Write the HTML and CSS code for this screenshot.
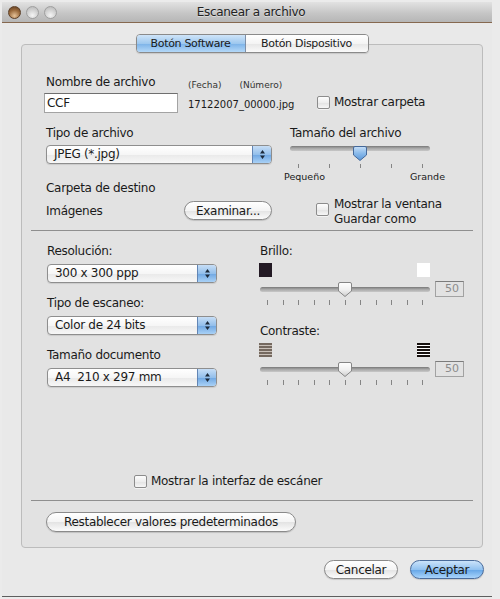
FILE: index.html
```html
<!DOCTYPE html>
<html lang="es">
<head>
    <meta charset="UTF-8">
    <title>Escanear a archivo</title>
    <link rel="stylesheet" href="styles.css">
</head>
<body>
    <svg class="defs" width="0" height="0">
        <defs>
            <linearGradient id="knobGray" x1="0" y1="0" x2="0" y2="1">
                <stop offset="0" stop-color="#ffffff"/>
                <stop offset="0.5" stop-color="#f1f1f1"/>
                <stop offset="1" stop-color="#cfcfcf"/>
            </linearGradient>
            <linearGradient id="knobBlue" x1="0" y1="0" x2="0" y2="1">
                <stop offset="0" stop-color="#c8e0f8"/>
                <stop offset="0.5" stop-color="#88b9ea"/>
                <stop offset="1" stop-color="#5b97d8"/>
            </linearGradient>
        </defs>
    </svg>

    <div class="window">
        <div class="titlebar">
            <div class="lights">
                <span class="light close"></span>
                <span class="light"></span>
                <span class="light"></span>
            </div>
            <div class="title">Escanear a archivo</div>
        </div>

        <div class="tabs-bar">
            <div class="segmented">
                <div class="tab active">Botón Software</div>
                <div class="tab">Botón Dispositivo</div>
            </div>
        </div>

        <div class="tabbox">
            <div class="row row-name">
                <div class="col-name">
                    <div class="label indent">Nombre de archivo</div>
                    <div class="field">CCF</div>
                </div>
                <div class="col-file">
                    <div class="hint"><span class="hint-date">(Fecha)</span><span>(Número)</span></div>
                    <div class="filename">17122007_00000.jpg</div>
                </div>
                <div class="col-show">
                    <div class="check-row"><span class="checkbox"></span><span>Mostrar carpeta</span></div>
                </div>
            </div>

            <div class="row row-type">
                <div class="col-type">
                    <div class="label">Tipo de archivo</div>
                    <div class="popup popup-type">
                        <span class="popup-value">JPEG (*.jpg)</span>
                        <span class="popup-arrows"><svg width="7" height="11" viewBox="0 0 7 11"><path d="M3.5 1 L6 4.5 H1 Z M1 6.5 H6 L3.5 10 Z" fill="#1d2a3a"/></svg></span>
                    </div>
                </div>
                <div class="col-size">
                    <div class="label size-label">Tamaño del archivo</div>
                    <div class="slider size-slider">
                        <div class="track"></div>
                        <svg class="knob size-knob" width="14" height="15" viewBox="0 0 14 15"><path d="M2 0.5 H12 Q13.5 0.5 13.5 2 V9 L7 14.5 L0.5 9 V2 Q0.5 0.5 2 0.5 Z" fill="url(#knobBlue)" stroke="#45699a"/></svg>
                    </div>
                    <div class="ticks size-ticks">
                        <span></span><span></span><span></span><span></span><span></span>
                    </div>
                    <div class="size-names"><span>Pequeño</span><span>Grande</span></div>
                </div>
            </div>

            <div class="row row-dest">
                <div class="col-dest">
                    <div class="label">Carpeta de destino</div>
                    <div class="dest-line">
                        <span>Imágenes</span>
                        <button class="btn btn-browse">Examinar...</button>
                    </div>
                </div>
                <div class="col-save">
                    <span class="checkbox"></span>
                    <span class="save-text">Mostrar la ventana<br>Guardar como</span>
                </div>
            </div>

            <div class="sep sep-top"></div>

            <div class="row row-scan">
                <div class="col-scan">
                    <div class="group">
                        <div class="label">Resolución:</div>
                        <div class="popup">
                            <span class="popup-value">300 x 300 ppp</span>
                            <span class="popup-arrows"><svg width="7" height="11" viewBox="0 0 7 11"><path d="M3.5 1 L6 4.5 H1 Z M1 6.5 H6 L3.5 10 Z" fill="#1d2a3a"/></svg></span>
                        </div>
                    </div>
                    <div class="group">
                        <div class="label">Tipo de escaneo:</div>
                        <div class="popup">
                            <span class="popup-value">Color de 24 bits</span>
                            <span class="popup-arrows"><svg width="7" height="11" viewBox="0 0 7 11"><path d="M3.5 1 L6 4.5 H1 Z M1 6.5 H6 L3.5 10 Z" fill="#1d2a3a"/></svg></span>
                        </div>
                    </div>
                    <div class="group">
                        <div class="label">Tamaño documento</div>
                        <div class="popup">
                            <span class="popup-value">A4&nbsp; 210 x 297 mm</span>
                            <span class="popup-arrows"><svg width="7" height="11" viewBox="0 0 7 11"><path d="M3.5 1 L6 4.5 H1 Z M1 6.5 H6 L3.5 10 Z" fill="#1d2a3a"/></svg></span>
                        </div>
                    </div>
                </div>

                <div class="col-adjust">
                    <div class="adjust">
                        <div class="label adj-label">Brillo:</div>
                        <div class="adj-icons">
                            <span class="icon icon-dark"></span>
                            <span class="icon icon-light"></span>
                        </div>
                        <div class="adj-slider">
                            <div class="slider">
                                <div class="track"></div>
                                <svg class="knob adj-knob" width="14" height="15" viewBox="0 0 14 15"><path d="M2 0.5 H12 Q13.5 0.5 13.5 2 V9 L7 14.5 L0.5 9 V2 Q0.5 0.5 2 0.5 Z" fill="url(#knobGray)" stroke="#858585"/></svg>
                            </div>
                            <div class="valuebox">50</div>
                        </div>
                        <div class="ticks adj-ticks">
                            <span></span><span></span><span></span><span></span><span></span><span></span><span></span><span></span><span></span><span></span><span></span>
                        </div>
                    </div>
                    <div class="adjust adjust-contrast">
                        <div class="label adj-label">Contraste:</div>
                        <div class="adj-icons">
                            <span class="icon icon-low"></span>
                            <span class="icon icon-high"></span>
                        </div>
                        <div class="adj-slider">
                            <div class="slider">
                                <div class="track"></div>
                                <svg class="knob adj-knob" width="14" height="15" viewBox="0 0 14 15"><path d="M2 0.5 H12 Q13.5 0.5 13.5 2 V9 L7 14.5 L0.5 9 V2 Q0.5 0.5 2 0.5 Z" fill="url(#knobGray)" stroke="#858585"/></svg>
                            </div>
                            <div class="valuebox">50</div>
                        </div>
                        <div class="ticks adj-ticks">
                            <span></span><span></span><span></span><span></span><span></span><span></span><span></span><span></span><span></span><span></span><span></span>
                        </div>
                    </div>
                </div>
            </div>

            <div class="row row-interface">
                <div class="check-row"><span class="checkbox"></span><span>Mostrar la interfaz de escáner</span></div>
            </div>

            <div class="sep sep-bottom"></div>

            <div class="row row-reset">
                <button class="btn btn-reset">Restablecer valores predeterminados</button>
            </div>
        </div>

        <div class="actions">
            <button class="btn btn-action">Cancelar</button>
            <button class="btn btn-action default">Aceptar</button>
        </div>
    </div>
</body>
</html>
```

FILE: styles.css
```css
body {
    margin: 0;
    background: #ebebeb;
    font-family: "DejaVu Sans", "Liberation Sans", sans-serif;
    font-size: 12px;
    letter-spacing: -0.3px;
    color: #1a1a1a;
}

.defs {
    position: absolute;
}

.window {
    box-sizing: border-box;
    width: 490px;
    height: 595px;
    margin: 2px 0 0 2px;
    background: #e9e9e9;
    border-bottom: 1px solid #5e5e5e;
}

/* title bar */

.titlebar {
    display: flex;
    align-items: center;
    height: 20px;
    padding-right: 47px;
    background: linear-gradient(#e2e2e2, #c6c6c6 55%, #b6b6b6);
    border-bottom: 1px solid #86684f;
}

.lights {
    display: flex;
    gap: 5px;
    padding-left: 6px;
}

.light {
    box-sizing: border-box;
    width: 13px;
    height: 13px;
    border-radius: 50%;
    border: 1px solid #9f9f9f;
    background: radial-gradient(circle at 50% 75%, #f4f4f4, #d0d0d0 55%, #b4b4b4);
}

.light.close {
    border-color: #5c3f27;
    background: radial-gradient(circle at 50% 80%, #e6c298, #9a6a3c 55%, #5b3a1e);
}

.title {
    flex: 1;
    text-align: center;
    color: #222;
    text-shadow: 0 1px 0 rgba(255, 255, 255, 0.45);
}

/* tabs */

.tabs-bar {
    position: relative;
    z-index: 1;
    display: flex;
    justify-content: center;
    width: 462px;
    margin: 11px 0 0 19px;
}

.segmented {
    display: flex;
    height: 19px;
    box-sizing: border-box;
    border: 1px solid #8a8a8a;
    border-radius: 4px;
    overflow: hidden;
    box-shadow: 0 1px 1px rgba(0, 0, 0, 0.12);
}

.tab {
    font-size: 11px;
    line-height: 17px;
    text-align: center;
    background: linear-gradient(#ffffff, #f4f4f4 50%, #e6e6e6 51%, #fafafa);
}

.tab:first-child {
    width: 108px;
    border-right: 1px solid #7d8fa8;
}

.tab:last-child {
    width: 122px;
}

.tab.active {
    background: linear-gradient(#cfe4f8, #9ec8ef 50%, #7bb2e8 51%, #b4d8f8);
}

.tabbox {
    box-sizing: border-box;
    width: 462px;
    height: 504px;
    margin: -9px 0 0 19px;
    background: #e2e2e2;
    border: 1px solid #bcbcbc;
    border-radius: 4px;
}

/* rows */

.row {
    display: flex;
}

.label {
    line-height: 15px;
}

.indent {
    margin-left: 2px;
}

.row-name {
    margin-top: 30px;
    padding-left: 22px;
}

.col-name {
    width: 134px;
}

.field {
    box-sizing: border-box;
    height: 20px;
    margin-top: 3px;
    padding-left: 2px;
    line-height: 19px;
    background: #fff;
    border: 1px solid #a3a3a3;
    border-top-color: #6f6f6f;
}

.col-file {
    width: 129px;
    margin-left: 10px;
    padding-top: 5px;
}

.hint {
    font-size: 9px;
    line-height: 11px;
    letter-spacing: 0;
    color: #333;
}

.hint-date {
    margin-right: 18px;
}

.filename {
    margin-top: 7px;
    font-size: 10px;
    line-height: 13px;
    letter-spacing: 0;
}

.col-show {
    padding-top: 20px;
}

.check-row {
    display: flex;
    align-items: center;
    gap: 4px;
    line-height: 15px;
}

.checkbox {
    box-sizing: border-box;
    width: 13px;
    height: 13px;
    flex: none;
    border: 1px solid #8c8c8c;
    border-radius: 2px;
    background: linear-gradient(#fdfdfd, #eeeeee 50%, #e2e2e2 51%, #f6f6f6);
    box-shadow: 0 1px 0 rgba(255, 255, 255, 0.6);
}

.row-type {
    height: 55px;
    margin-top: 13px;
    padding-left: 24px;
}

.col-type {
    width: 226px;
}

.popup {
    display: flex;
    box-sizing: border-box;
    height: 19px;
    margin-top: 5px;
    border: 1px solid #8e8e8e;
    border-radius: 4px;
    background: linear-gradient(#ffffff, #f6f6f6 50%, #e9e9e9 51%, #f7f7f7);
    box-shadow: 0 1px 1px rgba(0, 0, 0, 0.1);
}

.popup-type {
    margin-top: 4px;
}

.popup-value {
    flex: 1;
    padding-left: 7px;
    line-height: 17px;
}

.popup-arrows {
    display: flex;
    align-items: center;
    justify-content: center;
    width: 18px;
    border-left: 1px solid #6285b4;
    border-radius: 0 3px 3px 0;
    background: linear-gradient(#c7def6, #93bfeb 50%, #6ea6e2 51%, #a9d1f6);
}

.col-size {
    width: 161px;
    margin-left: 12px;
}

.size-label {
    margin-left: 6px;
}

.slider {
    position: relative;
    height: 16px;
}

.track {
    height: 5px;
    margin-top: 5px;
    border-radius: 3px;
    background: linear-gradient(#787878, #a6a6a6 45%, #c8c8c8);
}

.knob {
    position: absolute;
    top: 0;
}

.size-slider {
    width: 140px;
    margin: 5px 0 0 6px;
}

.size-slider .track {
    margin-top: 4px;
}

.size-knob {
    left: 63px;
}

.ticks {
    display: flex;
    justify-content: space-between;
    margin-top: 2px;
}

.ticks span {
    width: 1px;
    height: 4px;
    background: #858585;
}

.size-ticks {
    width: 140px;
    margin-left: 6px;
    box-sizing: border-box;
    padding: 0 7px 0 8px;
}

.size-names {
    display: flex;
    justify-content: space-between;
    margin-top: 3px;
    font-size: 9.5px;
    line-height: 12px;
    letter-spacing: 0;
}

.row-dest {
    height: 46px;
    padding-left: 24px;
}

.col-dest {
    width: 226px;
}

.dest-line {
    display: flex;
    align-items: center;
    justify-content: space-between;
    height: 19px;
    margin-top: 5px;
}

.col-save {
    display: flex;
    align-items: flex-start;
    margin-left: 44px;
    padding-top: 16px;
}

.col-save .checkbox {
    margin-top: 6px;
}

.save-text {
    margin-left: 5px;
    line-height: 15px;
}

.sep {
    margin: 0 9px;
    border-top: 1px solid #8f8f8f;
}

.sep-top {
    margin-top: 3px;
}

.sep-bottom {
    margin-top: 11px;
}

/* scan settings */

.row-scan {
    height: 143px;
    margin-top: 13px;
    padding-left: 25px;
}

.col-scan {
    width: 170px;
}

.group + .group {
    margin-top: 13px;
}

.col-adjust {
    width: 205px;
    margin-left: 42px;
}

.adj-label {
    margin-left: 1px;
}

.adjust-contrast {
    margin-top: 19px;
}

.adj-icons {
    display: flex;
    justify-content: space-between;
    width: 171px;
    margin-top: 4px;
}

.icon {
    width: 13px;
    height: 14px;
}

.icon-dark {
    background: #231a24;
}

.icon-light {
    background: #ffffff;
}

.icon-low {
    background: repeating-linear-gradient(#75695f 0 2px, #c9c0b8 2px 3px);
}

.icon-high {
    background: repeating-linear-gradient(#17110f 0 2px, #ffffff 2px 3px);
}

.adj-slider {
    display: flex;
    align-items: flex-start;
    margin-top: 4px;
}

.adj-slider .slider {
    width: 170px;
    margin: 1px 0 0 1px;
}

.adj-knob {
    left: 78px;
}

.valuebox {
    box-sizing: border-box;
    width: 29px;
    height: 16px;
    margin-left: 5px;
    padding-right: 4px;
    border: 1px solid #a2a2a2;
    border-top-color: #7c7c7c;
    text-align: right;
    font-size: 11px;
    line-height: 14px;
    letter-spacing: 0;
    color: #8c8c8c;
}

.adj-ticks {
    width: 170px;
    margin-left: 1px;
    box-sizing: border-box;
    padding: 0 7px;
}

.adj-ticks span {
    height: 5px;
}

.row-interface {
    margin-top: 87px;
    padding-left: 112px;
}

.row-reset {
    margin-top: 11px;
    padding-left: 24px;
}

/* buttons */

.btn {
    box-sizing: border-box;
    height: 20px;
    padding: 0;
    font-family: inherit;
    font-size: 12px;
    letter-spacing: -0.3px;
    color: #1a1a1a;
    border: 1px solid #8a8a8a;
    border-radius: 10px;
    background: linear-gradient(#ffffff, #f4f4f4 50%, #e3e3e3 51%, #fbfbfb);
    box-shadow: 0 1px 1px rgba(0, 0, 0, 0.15);
}

.btn-browse {
    width: 88px;
    height: 19px;
}

.btn-reset {
    width: 250px;
}

.actions {
    display: flex;
    justify-content: flex-end;
    gap: 12px;
    margin-top: 12px;
    padding-right: 8px;
}

.btn-action {
    width: 74px;
    height: 19px;
}

.btn-action.default {
    border-color: #4a6c9c;
    background: linear-gradient(#cbe3fa, #92c2f0 50%, #64a5e6 51%, #a9d4fb);
}
```
